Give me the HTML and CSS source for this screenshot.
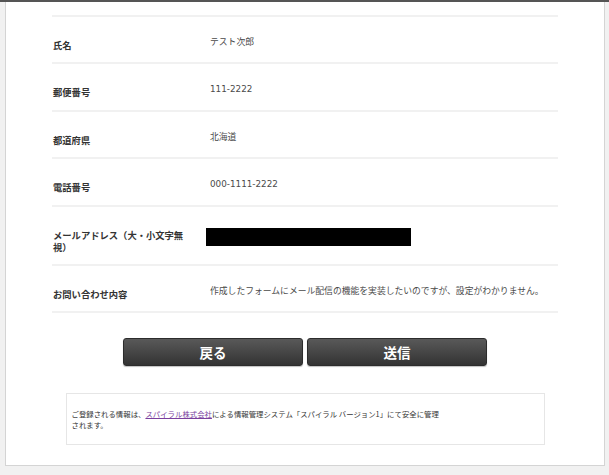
FILE: index.html
```html
<!DOCTYPE html>
<html lang="ja">
<head>
<meta charset="utf-8">
<title>確認画面</title>
<link rel="stylesheet" href="styles.css">
</head>
<body>
<div class="topbar"></div>
<main class="card">
  <div class="table">
    <div class="row">
      <div class="label">氏名</div>
      <div class="value">テスト次郎</div>
    </div>
    <div class="row">
      <div class="label">郵便番号</div>
      <div class="value">111-2222</div>
    </div>
    <div class="row">
      <div class="label">都道府県</div>
      <div class="value">北海道</div>
    </div>
    <div class="row">
      <div class="label">電話番号</div>
      <div class="value">000-1111-2222</div>
    </div>
    <div class="row">
      <div class="label">メールアドレス（大・小文字無視）</div>
      <div class="value"><div class="masked"></div></div>
    </div>
    <div class="row">
      <div class="label">お問い合わせ内容</div>
      <div class="value">作成したフォームにメール配信の機能を実装したいのですが、設定がわかりません。</div>
    </div>
  </div>
  <div class="actions">
    <button class="btn" type="button">戻る</button>
    <button class="btn" type="button">送信</button>
  </div>
  <div class="notice">
    <p>ご登録される情報は、<a href="#">スパイラル株式会社</a>による情報管理システム「スパイラル バージョン1」にて安全に管理<br>されます。</p>
  </div>
</main>
</body>
</html>
```
FILE: styles.css
```css
html, body {
  margin: 0;
  padding: 0;
}
body {
  background: #f1f1f1;
  font-family: "Noto Sans CJK JP", "Noto Sans", sans-serif;
  color: #333;
}
.topbar {
  height: 2px;
  background: #555;
}
.card {
  margin: 0 4px 0 5px;
  background: #fff;
  border: 1px solid #d4d4d4;
  border-top: none;
  padding: 13px 46px 20px;
}
.table {
  width: 506px;
}
.row {
  display: grid;
  grid-template-columns: 158px 1fr;
  border-bottom: 2px solid #f1f1f1;
  padding: 22px 0 11.4px;
}
.row:first-child {
  border-top: 2px solid #f1f1f1;
}
.label {
  font-size: 9.3px;
  line-height: 12px;
  font-weight: bold;
  color: #333;
  padding-left: 1px;
  padding-right: 18px;
}
.value {
  font-family: "DejaVu Sans", "Noto Sans CJK JP", sans-serif;
  font-size: 8.8px;
  line-height: 12px;
  color: #4a4a4a;
  margin-top: -3px;
}
.masked {
  width: 205px;
  height: 18px;
  background: #000;
  margin: 2px 0 0 -4px;
}
.actions {
  display: flex;
  justify-content: center;
  gap: 4px;
  margin-top: 25px;
}
.btn {
  width: 180px;
  height: 28px;
  padding: 0;
  border: 1px solid #2c2c2c;
  border-radius: 3px;
  background: linear-gradient(#595959, #333);
  box-shadow: 0 1px 1px rgba(0, 0, 0, 0.25);
  color: #fff;
  font-family: "Noto Sans CJK JP", "Noto Sans", sans-serif;
  font-size: 13.5px;
  font-weight: bold;
  line-height: 26px;
}
.notice {
  width: 479px;
  box-sizing: border-box;
  margin: 27px auto 0;
  border: 1px solid #e6e6e6;
  padding: 14px 5px;
}
.notice p {
  margin: 0;
  font-size: 7.4px;
  line-height: 11px;
  color: #333;
  white-space: nowrap;
}
.notice a {
  color: #7b3f9e;
  text-decoration: underline;
}
```
